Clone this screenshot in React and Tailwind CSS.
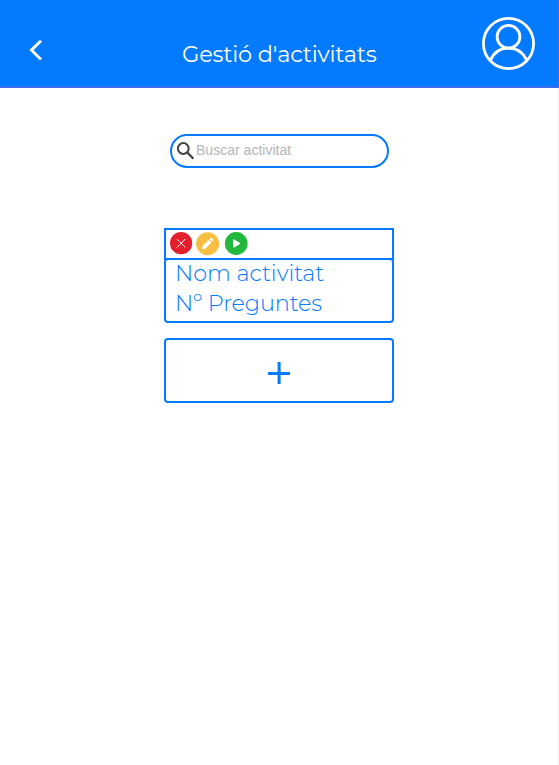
import React from "react";

function Header() {
  return (
    <header className="flex h-[88px] items-start border-b-2 border-[#3b6eeb] bg-[#047aff] text-white">
      <button aria-label="Enrere" className="ml-[28px] mt-[38px] h-6 w-[16px]">
        <svg width="16" height="24" viewBox="0 0 16 24" fill="none" stroke="currentColor" strokeWidth="2.9">
          <path d="M13 2.7 3.4 12.1l9.6 9.4" />
        </svg>
      </button>
      <h1 className="ml-[138px] mt-[38px] w-[200px] whitespace-nowrap text-[22.4px] leading-[32px] font-normal tracking-[-0.15px]">
        Gestió d'activitats
      </h1>
      <svg className="ml-[99px] mt-[16px]" width="55" height="55" viewBox="0 0 55 55" fill="none" stroke="currentColor" strokeWidth="2.8">
        <circle cx="27.5" cy="27.5" r="25.1" />
        <circle cx="27.5" cy="20.8" r="11.4" />
        <path d="M9.2 44.8C12.4 37 19 32.2 27.5 32.2S42.6 37 45.8 44.8" />
      </svg>
    </header>
  );
}

function Search() {
  return (
    <label className="ml-[170px] mt-[46px] flex h-[34px] w-[219px] items-center rounded-full border-2 border-[#047aff] pl-[4px]">
      <svg width="20" height="20" viewBox="0 0 20 20" fill="none" stroke="#444" strokeWidth="2">
        <circle cx="7.3" cy="7.5" r="5.4" />
        <path d="m11.2 11.4 6.2 6.4" strokeWidth="2.3" />
      </svg>
      <span className="-mt-[2px] font-['Liberation_Sans',Arial,sans-serif] text-[14px] leading-5 tracking-[0.02px] text-[#b5b5b5]">
        Buscar activitat
      </span>
    </label>
  );
}

function Actions() {
  return (
    <div className="-mb-[2px] flex h-[32px] items-start border-2 border-[#047aff] pl-[3.5px] pt-[1.5px]">
      <svg width="23" height="23" viewBox="0 0 23 23">
        <circle cx="11.1" cy="11.2" r="11.1" fill="#e3202b" />
        <path d="m7 7 8.4 8.4m0-8.4L7 15.4" stroke="white" strokeWidth="1" />
      </svg>
      <svg className="ml-[3px]" width="24" height="24" viewBox="0 0 24 24">
        <circle cx="11.6" cy="11.7" r="11.5" fill="#f7be42" />
        <path d="m6 17.2.8-3.6 5.8-5.9 2.8 2.8-5.8 5.9zM13.3 7l1.2-1.1q.5-.5 1.1 0l1.7 1.7q.5.5 0 1.1l-1.2 1.1z" fill="white" />
      </svg>
      <svg className="ml-[5px]" width="24" height="24" viewBox="0 0 24 24">
        <circle cx="11.2" cy="11.5" r="11.4" fill="#22b83d" />
        <path d="M8.8 8.2v6.6l5.4-3.3z" fill="white" stroke="white" strokeWidth="1.6" strokeLinejoin="round" />
      </svg>
    </div>
  );
}

export default function App() {
  return (
    <div className="relative h-[765px] w-[559px] overflow-hidden bg-white font-['Montserrat','Inter',sans-serif]">
      <Header />
      <Search />
      <main className="ml-[164px] mt-[60px] w-[230px] text-[#047aff]">
        <Actions />
        <div className="h-[65px] rounded-[4px] border-2 border-[#047aff] pl-[9px] text-[22.4px] leading-[30px] font-[350]">
          <div className="-mt-[2px] whitespace-nowrap tracking-[-0.05px]">Nom activitat</div>
          <div className="whitespace-nowrap tracking-[-0.12px]">Nº Preguntes</div>
        </div>
        <button aria-label="Afegir" className="mt-[15px] flex h-[65px] w-full items-center justify-center rounded-[4px] border-2 border-[#047aff]">
          <svg className="mt-[5px]" width="24" height="24" viewBox="0 0 24 24" fill="none" stroke="currentColor" strokeWidth="3">
            <path d="M1 12.4h22M12.1 1v22" />
          </svg>
        </button>
      </main>
      <div className="absolute right-0 top-0 h-[88px] w-px bg-[#3b6eeb]" />
      <div className="absolute right-0 top-[88px] h-[677px] w-px bg-[#eeeeee]" />
    </div>
  );
}
